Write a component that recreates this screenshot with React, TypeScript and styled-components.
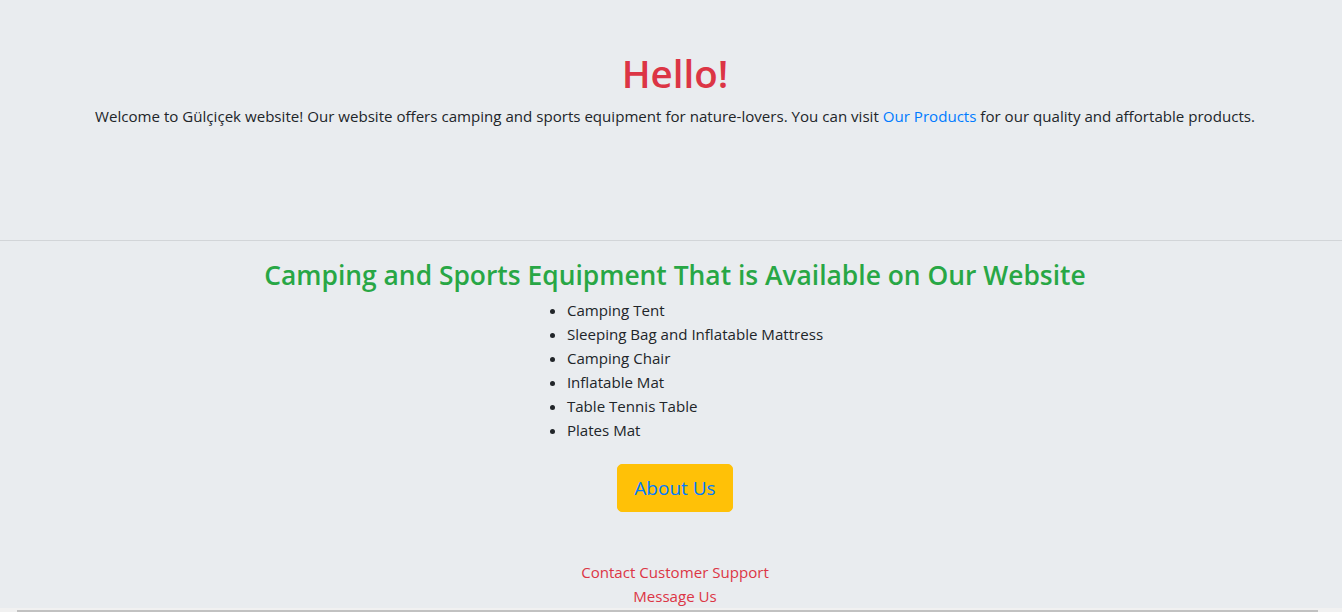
import React from "react";
import styled, { createGlobalStyle } from "styled-components";

const GlobalStyle = createGlobalStyle`
  html, body {
    margin: 0;
    padding: 0;
    background: #e9ecef;
    overflow: hidden;
  }
  body {
    font-family: "Open Sans", "Noto Sans", Arial, sans-serif;
    font-size: 15.1px;
    line-height: 1.5;
    color: #212529;
  }
`;

const Page = styled.div`
  min-height: 612px;
  background: #e9ecef;
`;

const Jumbotron = styled.header`
  padding: 49px 0 0 8px;
  height: 241px;
  box-sizing: border-box;
  text-align: center;
  border-bottom: 1px solid #d2d5d8;
`;

const Title = styled.h1`
  margin: 0 0 7px;
  font-size: 38.5px;
  font-weight: 600;
  line-height: 48px;
  color: #dc3545;
`;

const Lead = styled.p`
  margin: 0;
  font-size: 15.1px;
  line-height: 24px;
`;

const Link = styled.a`
  color: #007bff;
  text-decoration: none;
`;

const Section = styled.section`
  padding: 17px 0 0 8px;
  text-align: center;
`;

const SectionTitle = styled.h3`
  margin: 0 0 6px;
  font-size: 26.4px;
  font-weight: 600;
  line-height: 34px;
  color: #28a745;
`;

const List = styled.ul`
  display: inline-block;
  margin: 0;
  padding-left: 40px;
  text-align: left;
  list-style: disc;
`;

const Item = styled.li`
  font-size: 15.1px;
  line-height: 24px;
`;

const ButtonRow = styled.div`
  margin-top: 22px;
`;

const Button = styled.button`
  font-family: inherit;
  font-size: 19px;
  line-height: 30px;
  padding: 8px 16px;
  color: #007bff;
  background: #ffc107;
  border: 1px solid #ffc107;
  border-radius: 5px;
  cursor: pointer;
`;

const Footer = styled.footer`
  margin-top: 48px;
  padding-left: 8px;
  text-align: center;
`;

const FooterLink = styled.div`
  color: #dc3545;
  font-size: 15.1px;
  line-height: 24px;
`;

const ScrollTrack = styled.div`
  position: fixed;
  left: 0;
  right: 0;
  bottom: 0;
  height: 4px;
  background: #f1f1f1;
  padding: 2px 24px 0 17px;
  box-sizing: border-box;
`;

const ScrollThumb = styled.div`
  height: 2px;
  background: #c1c1c1;
`;

const items = [
  "Camping Tent",
  "Sleeping Bag and Inflatable Mattress",
  "Camping Chair",
  "Inflatable Mat",
  "Table Tennis Table",
  "Plates Mat",
];

export default function App() {
  return (
    <Page>
      <GlobalStyle />
      <Jumbotron>
        <Title>Hello!</Title>
        <Lead>
          Welcome to Gülçiçek website! Our website offers camping and sports equipment for
          nature-lovers. You can visit <Link href="#">Our Products</Link> for our quality and
          affortable products.
        </Lead>
      </Jumbotron>
      <Section>
        <SectionTitle>Camping and Sports Equipment That is Available on Our Website</SectionTitle>
        <List>
          {items.map((it) => (
            <Item key={it}>{it}</Item>
          ))}
        </List>
        <ButtonRow>
          <Button>About Us</Button>
        </ButtonRow>
      </Section>
      <Footer>
        <FooterLink>Contact Customer Support</FooterLink>
        <FooterLink>Message Us</FooterLink>
      </Footer>
      <ScrollTrack>
        <ScrollThumb />
      </ScrollTrack>
    </Page>
  );
}
